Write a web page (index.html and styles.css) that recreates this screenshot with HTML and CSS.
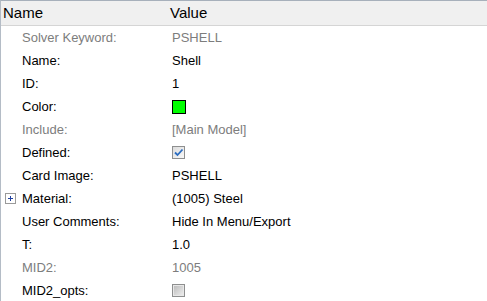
FILE: index.html
```html
<!DOCTYPE html>
<html>
  <head>
    <title>Properties</title>
    <meta name="viewport" content="width=device-width, initial-scale=1" />
    <link rel="stylesheet" href="styles.css">
  </head>
  <body>
    <div class="grid">
      <div class="head name-col">Name</div>
      <div class="head value-col">Value</div>

      <div class="cell label muted">Solver Keyword:</div>
      <div class="cell value muted">PSHELL</div>

      <div class="cell label">Name:</div>
      <div class="cell value">Shell</div>

      <div class="cell label">ID:</div>
      <div class="cell value">1</div>

      <div class="cell label">Color:</div>
      <div class="cell value"><span class="swatch"></span></div>

      <div class="cell label muted">Include:</div>
      <div class="cell value muted">[Main Model]</div>

      <div class="cell label">Defined:</div>
      <div class="cell value">
        <span class="check">
          <svg width="11" height="11" viewBox="0 0 11 11"><path d="M2 5.5 L4.5 8 L9.5 2.5" fill="none" stroke="#2a6cc0" stroke-width="1.8"/></svg>
        </span>
      </div>

      <div class="cell label">Card Image:</div>
      <div class="cell value">PSHELL</div>

      <div class="cell label"><span class="expand">
        <svg width="11" height="11" viewBox="0 0 11 11"><rect x="0.5" y="0.5" width="10" height="10" fill="#fff" stroke="#9a9a9a"/><path d="M3 5.5 H8 M5.5 3 V8" stroke="#2040a0" stroke-width="1"/></svg>
      </span>Material:</div>
      <div class="cell value">(1005) Steel</div>

      <div class="cell label">User Comments:</div>
      <div class="cell value">Hide In Menu/Export</div>

      <div class="cell label">T:</div>
      <div class="cell value">1.0</div>

      <div class="cell label muted">MID2:</div>
      <div class="cell value muted">1005</div>

      <div class="cell label">MID2_opts:</div>
      <div class="cell value"><span class="check off"></span></div>
    </div>
  </body>
</html>
```

FILE: styles.css
```css
html {
  font-family: "Liberation Sans", Arial, sans-serif;
  font-size: 13px;
  color: #000;
}
body {
  margin: 0;
  background: #fff;
}
.grid {
  display: grid;
  grid-template-columns: 168px 1fr;
  grid-auto-rows: 23px;
  border-top: 1px solid #a7b0bb;
  border-left: 1px solid #b4bcc6;
  height: 300px;
  overflow: hidden;
}
.head {
  height: 24px;
  line-height: 24px;
  font-size: 15px;
  background-color: #f0f0f0;
  border-bottom: 1px solid #d5d5d5;
}
.name-col {
  padding-left: 2px;
}
.value-col {
  padding-left: 1px;
}
.grid .head {
  grid-row: 1;
}
.grid {
  grid-template-rows: 25px;
}
.cell {
  line-height: 23px;
  white-space: nowrap;
  display: flex;
  align-items: center;
}
.label {
  padding-left: 21px;
  position: relative;
}
.value {
  padding-left: 3px;
}
.muted {
  color: #7d7d7d;
}
.swatch {
  width: 12px;
  height: 12px;
  background-color: #00ff00;
  border: 1px solid #000;
}
.check {
  width: 11px;
  height: 11px;
  border: 1px solid #8e8f8f;
  background: linear-gradient(135deg, #dcdcdc, #f8f8f8);
  display: flex;
  align-items: center;
  justify-content: center;
}
.check.off {
  background: linear-gradient(135deg, #b8b8b8, #f0f0f0);
  box-shadow: inset 0 0 0 1px #e8e8e8;
}
.expand {
  position: absolute;
  left: 4px;
  top: 6px;
  display: flex;
}
```
